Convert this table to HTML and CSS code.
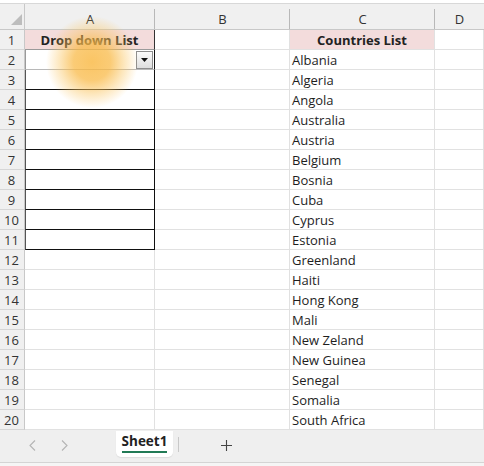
FILE: index.html
```html
<!DOCTYPE html>
<html>
<head>
<meta charset="utf-8">
<link rel="stylesheet" href="styles.css">
</head>
<body>
<div class="app">
  <div class="topstrip"></div>
  <div class="sheet">
    <div class="corner"><svg width="11" height="11" viewBox="0 0 11 11"><polygon points="11,0 11,11 0,11" fill="#bdbdbd"/></svg></div>
    <div class="ch">A</div><div class="ch">B</div><div class="ch">C</div><div class="ch last">D</div>

    <div class="rh">1</div><div class="c a hd">Drop down List</div><div class="c"></div><div class="c hd">Countries List</div><div class="c"></div>
    <div class="rh">2</div><div class="c a dd"><span class="ddbtn"><svg width="7" height="4" viewBox="0 0 7 4"><polygon points="0,0 7,0 3.5,4" fill="#111"/></svg></span></div><div class="c"></div><div class="c t">Albania</div><div class="c"></div>
    <div class="rh">3</div><div class="c a bx"></div><div class="c"></div><div class="c t">Algeria</div><div class="c"></div>
    <div class="rh">4</div><div class="c a bx"></div><div class="c"></div><div class="c t">Angola</div><div class="c"></div>
    <div class="rh">5</div><div class="c a bx"></div><div class="c"></div><div class="c t">Australia</div><div class="c"></div>
    <div class="rh">6</div><div class="c a bx"></div><div class="c"></div><div class="c t">Austria</div><div class="c"></div>
    <div class="rh">7</div><div class="c a bx"></div><div class="c"></div><div class="c t">Belgium</div><div class="c"></div>
    <div class="rh">8</div><div class="c a bx"></div><div class="c"></div><div class="c t">Bosnia</div><div class="c"></div>
    <div class="rh">9</div><div class="c a bx"></div><div class="c"></div><div class="c t">Cuba</div><div class="c"></div>
    <div class="rh">10</div><div class="c a bx"></div><div class="c"></div><div class="c t">Cyprus</div><div class="c"></div>
    <div class="rh">11</div><div class="c a bx"></div><div class="c"></div><div class="c t">Estonia</div><div class="c"></div>
    <div class="rh">12</div><div class="c"></div><div class="c"></div><div class="c t">Greenland</div><div class="c"></div>
    <div class="rh">13</div><div class="c"></div><div class="c"></div><div class="c t">Haiti</div><div class="c"></div>
    <div class="rh">14</div><div class="c"></div><div class="c"></div><div class="c t">Hong Kong</div><div class="c"></div>
    <div class="rh">15</div><div class="c"></div><div class="c"></div><div class="c t">Mali</div><div class="c"></div>
    <div class="rh">16</div><div class="c"></div><div class="c"></div><div class="c t">New Zeland</div><div class="c"></div>
    <div class="rh">17</div><div class="c"></div><div class="c"></div><div class="c t">New Guinea</div><div class="c"></div>
    <div class="rh">18</div><div class="c"></div><div class="c"></div><div class="c t">Senegal</div><div class="c"></div>
    <div class="rh">19</div><div class="c"></div><div class="c"></div><div class="c t">Somalia</div><div class="c"></div>
    <div class="rh">20</div><div class="c"></div><div class="c"></div><div class="c t">South Africa</div><div class="c"></div>
  </div>
  <div class="tabbar">
    <div class="nav">
      <svg class="chev" width="7" height="11" viewBox="0 0 7 11"><polyline points="6,0.5 1,5.5 6,10.5" fill="none" stroke="#b4b4b4" stroke-width="1.1"/></svg>
      <svg class="chev" width="7" height="11" viewBox="0 0 7 11"><polyline points="1,0.5 6,5.5 1,10.5" fill="none" stroke="#b4b4b4" stroke-width="1.1"/></svg>
    </div>
    <div class="tab"><span class="tabname">Sheet1</span></div>
    <div class="sep"></div>
    <div class="add"><svg width="11" height="11" viewBox="0 0 11 11"><path d="M5.5 0V11M0 5.5H11" stroke="#444" stroke-width="1.1"/></svg></div>
  </div>
  <div class="glow"></div>
</div>
</body>
</html>
```
FILE: styles.css
```css
html, body {
  margin: 0;
  padding: 0;
  background: #fff;
}
.app {
  position: relative;
  width: 484px;
  height: 466px;
  overflow: hidden;
  font-family: "Open Sans", "Noto Sans", sans-serif;
  color: #222;
}
.topstrip {
  height: 3px;
  background: #fff;
  border-bottom: 1px solid #d8d8d8;
}
.sheet {
  display: grid;
  grid-template-columns: 25px 130px 135px 145px 49px;
  grid-template-rows: 26px repeat(20, 20px);
}
.sheet > div {
  box-sizing: border-box;
}
.corner {
  background: #f0f0f0;
  border-right: 1px solid #c8c8c8;
  border-bottom: 1px solid #c8c8c8;
  display: flex;
  align-items: flex-end;
  justify-content: flex-end;
  padding: 0 2px 4px 0;
}
.corner svg { display: block; }
.ch {
  position: relative;
  background: #f0f0f0;
  border-bottom: 1px solid #c8c8c8;
  text-align: center;
  font-size: 13px;
  line-height: 19px;
  padding-top: 6px;
  color: #333;
}
.ch::after {
  content: "";
  position: absolute;
  right: 0;
  top: 5px;
  bottom: 0;
  width: 1px;
  background: #b8b8b8;
}
.ch.last::after { display: none; }
.rh {
  background: #f0f0f0;
  border-right: 1px solid #c8c8c8;
  border-bottom: 1px solid #d6d6d6;
  text-align: center;
  font-size: 13px;
  line-height: 18px;
  padding-top: 1px;
  color: #333;
  padding-right: 1px;
}
.c {
  border-right: 1px solid #e1e1e1;
  border-bottom: 1px solid #e1e1e1;
  font-size: 13px;
  line-height: 18px;
  padding-top: 1px;
  white-space: nowrap;
  overflow: hidden;
}
.t {
  padding-left: 2px;
  color: #1e1e1e;
}
.hd {
  background: #f3dcdc;
  font-weight: 700;
  text-align: center;
  color: #222;
}
.a.hd {
  border-right-color: #333;
  border-bottom-color: #9a9a9a;
}
.dd {
  border-right: 1px solid #111;
  border-bottom: 1px solid #b8b8b8;
  border-left: 1px solid #9a9a9a;
  display: flex;
  align-items: center;
  justify-content: flex-end;
  padding: 0 1px 0 0;
}
.ddbtn {
  box-sizing: border-box;
  width: 17px;
  height: 18px;
  border: 1px solid #8e8e8e;
  background: linear-gradient(#fbfbfb, #dedede);
  display: flex;
  align-items: center;
  justify-content: center;
}
.ddbtn svg { display: block; }
.bx {
  border-right: 1px solid #111;
  border-bottom: 1px solid #111;
  border-left: 1px solid #555;
}
.tabbar {
  box-sizing: border-box;
  height: 33px;
  background: #efefef;
  border-bottom: 1px solid #d4d4d4;
  box-shadow: 0 3px 0 #f5f5f5;
  display: flex;
  align-items: flex-start;
}
.nav {
  display: flex;
  align-items: center;
  gap: 25px;
  width: 116px;
  box-sizing: border-box;
  padding-left: 29px;
  height: 30px;
  padding-top: 1px;
}
.chev { display: block; }
.tab {
  margin-top: 1px;
  width: 57px;
  height: 26px;
  background: #fff;
  border-radius: 0 0 5px 5px;
  box-shadow: 0 1px 1px rgba(0,0,0,0.08);
  display: flex;
  justify-content: center;
  align-items: flex-start;
}
.tabname {
  font-size: 13.5px;
  font-weight: 700;
  line-height: 19px;
  padding-top: 1px;
  color: #222;
  border-bottom: 2px solid #217a55;
}
.sep {
  width: 1px;
  height: 15px;
  background: #c8c8c8;
  margin: 7px 0 0 5px;
}
.add {
  margin: 10px 0 0 42px;
}
.add svg { display: block; }
.glow {
  position: absolute;
  left: 46px;
  top: 16px;
  width: 92px;
  height: 92px;
  border-radius: 50%;
  background: radial-gradient(circle closest-side, rgba(249,184,66,0.82) 0%, rgba(249,186,72,0.75) 40%, rgba(250,195,90,0.4) 70%, rgba(250,200,100,0) 100%);
  pointer-events: none;
}
```
